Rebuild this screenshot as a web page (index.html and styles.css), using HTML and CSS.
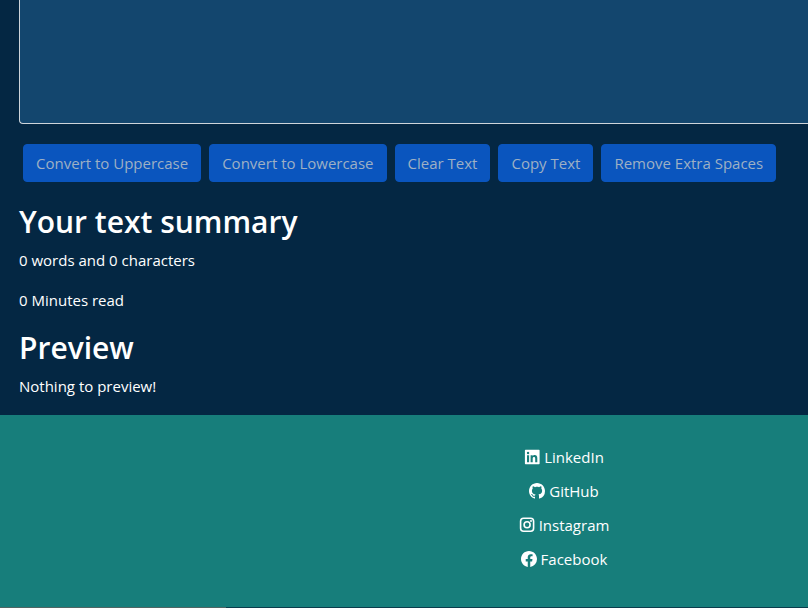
FILE: index.html
```html
<!DOCTYPE html>
<html lang="en">
<head>
<meta charset="utf-8">
<title>Text Utilities</title>
<link rel="stylesheet" href="styles.css">
</head>
<body>
<main class="editor">
  <textarea class="editor-input" aria-label="Text to analyze"></textarea>
  <div class="actions">
    <button class="btn" disabled>Convert to Uppercase</button>
    <button class="btn" disabled>Convert to Lowercase</button>
    <button class="btn" disabled>Clear Text</button>
    <button class="btn" disabled>Copy Text</button>
    <button class="btn" disabled>Remove Extra Spaces</button>
  </div>
  <section class="summary">
    <h2>Your text summary</h2>
    <p>0 words and 0 characters</p>
    <p>0 Minutes read</p>
    <h2>Preview</h2>
    <p>Nothing to preview!</p>
  </section>
</main>
<footer class="footer">
  <nav class="social">
    <a href="#"><svg viewBox="0 0 16 16" aria-hidden="true"><path fill-rule="evenodd" d="M1.5.8h13.5q.6 0 .6.6v13.2q0 .6-.6.6H1.5q-.6 0-.6-.6V1.4q0-.6.6-.6zM3 6.2v7h2.1v-7zM4.05 2.8a1.2 1.2 0 1 0 0 2.4 1.2 1.2 0 0 0 0-2.4zM6.6 6.2v7h2.1V9.6c0-1 .4-1.6 1.3-1.6s1.2.6 1.2 1.6v3.6h2.1V9c0-2-1-3-2.5-3-1 0-1.8.5-2.1 1.1v-.9z"/></svg>LinkedIn</a>
    <a href="#"><svg viewBox="0 0 16 16" aria-hidden="true"><path d="M8 0C3.58 0 0 3.58 0 8c0 3.54 2.29 6.53 5.47 7.59.4.07.55-.17.55-.38 0-.19-.01-.82-.01-1.49-2.01.37-2.53-.49-2.69-.94-.09-.23-.48-.94-.82-1.13-.28-.15-.68-.52-.01-.53.63-.01 1.08.58 1.23.82.72 1.21 1.87.87 2.33.66.07-.52.28-.87.51-1.07-1.78-.2-3.64-.89-3.64-3.95 0-.87.31-1.59.82-2.15-.08-.2-.36-1.02.08-2.12 0 0 .67-.21 2.2.82.64-.18 1.32-.27 2-.27s1.36.09 2 .27c1.53-1.04 2.2-.82 2.2-.82.44 1.1.16 1.92.08 2.12.51.56.82 1.27.82 2.15 0 3.07-1.87 3.75-3.65 3.95.29.25.54.73.54 1.48 0 1.07-.01 1.93-.01 2.2 0 .21.15.46.55.38A8.01 8.01 0 0 0 16 8c0-4.42-3.58-8-8-8z"/></svg>GitHub</a>
    <a href="#"><svg viewBox="0 0 16 16" aria-hidden="true"><g fill="none" stroke="currentColor" stroke-width="1.6"><rect x="1.6" y="1.3" width="13" height="13" rx="3"/><circle cx="8.1" cy="7.8" r="3"/></g><circle cx="12" cy="4" r="1"/></svg>Instagram</a>
    <a href="#"><svg viewBox="0 0 16 16" aria-hidden="true"><path d="M16 8.05C16 3.6 12.42 0 8 0S0 3.6 0 8.05c0 4.02 2.93 7.35 6.75 7.95v-5.62H4.72V8.05h2.03V6.28c0-2.02 1.2-3.13 3.02-3.13.88 0 1.79.16 1.79.16v1.98h-1.01c-.99 0-1.3.62-1.3 1.26v1.5h2.22l-.35 2.33H9.25V16A8.03 8.03 0 0 0 16 8.05z"/></svg>Facebook</a>
  </nav>
</footer>
</body>
</html>
```
FILE: styles.css
```css
* { box-sizing: border-box; }
body {
  margin: 0;
  background: #042743;
  color: #fff;
  font: 15px/24px "Segoe UI", "Open Sans", "Noto Sans", sans-serif;
}
.editor { padding: 0 0 17px 19px; }
.editor-input {
  display: block;
  width: 100%;
  height: 124px;
  border: 1px solid #ced4da;
  border-width: 0 0 1px 1px;
  border-radius: 0 0 0 4px;
  background: #13466e;
  color: #fff;
  resize: none;
}
.actions {
  display: flex;
  gap: 8px;
  padding: 20px 4px;
}
.btn {
  padding: 6px 12px;
  border: 1px solid #0a55be;
  border-radius: 4px;
  background: #0a55be;
  color: #9eb0c4;
  font: inherit;
  white-space: nowrap;
}
h2 {
  margin: 0 0 6px;
  font-size: 30px;
  line-height: 40px;
  font-weight: 600;
}
p { margin: 0 0 16px; }
.summary p:last-child { margin: 0; }
.footer {
  display: grid;
  grid-template-columns: 320px 1fr;
  padding: 30px 0 36px;
  background: #177e7b;
}
/* Thin two-tone rule that closes the page */
.footer + *, body::after {
  content: "";
  display: block;
  height: 1px;
  background: linear-gradient(to right, #4f6664 28%, #0b3d4c 28%);
}
.social {
  grid-column: 2;
  display: flex;
  flex-direction: column;
  align-items: center;
  gap: 10px;
}
.social a {
  display: flex;
  align-items: center;
  gap: 4px;
  color: #fff;
  text-decoration: none;
}
.social svg { width: 16px; height: 16px; fill: currentColor; }
```
